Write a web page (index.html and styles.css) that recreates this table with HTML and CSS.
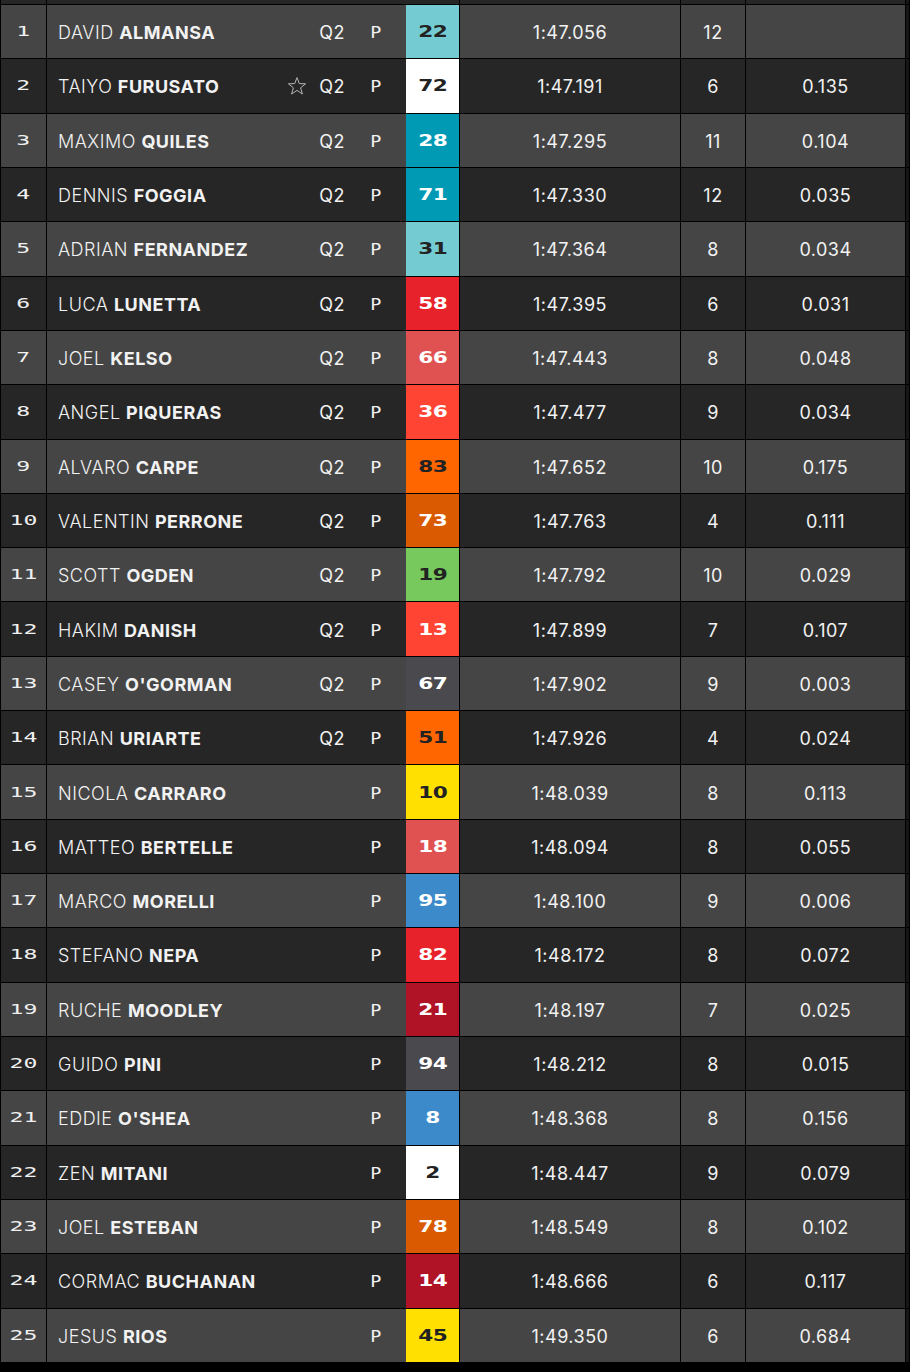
FILE: index.html
```html
<!DOCTYPE html>
<html>
<head>
<meta charset="utf-8">
<link rel="stylesheet" href="styles.css">
</head>
<body>
<div class="table">
  <div class="row top"><div class="c pos"></div><div class="c name"></div><div class="c time"></div><div class="c laps"></div><div class="c gap"></div><div class="c edge"></div></div>
</div>
<script>
const data = [
["DAVID","ALMANSA",1,"22","#75cbd2","d","1:47.056","12",""],
["TAIYO","FURUSATO",1,"72","#ffffff","d","1:47.191","6","0.135",1],
["MAXIMO","QUILES",1,"28","#009ab5","w","1:47.295","11","0.104"],
["DENNIS","FOGGIA",1,"71","#009ab5","w","1:47.330","12","0.035"],
["ADRIAN","FERNANDEZ",1,"31","#75cbd2","d","1:47.364","8","0.034"],
["LUCA","LUNETTA",1,"58","#e8222a","w","1:47.395","6","0.031"],
["JOEL","KELSO",1,"66","#e05252","w","1:47.443","8","0.048"],
["ANGEL","PIQUERAS",1,"36","#ff4433","w","1:47.477","9","0.034"],
["ALVARO","CARPE",1,"83","#ff6600","d","1:47.652","10","0.175"],
["VALENTIN","PERRONE",1,"73","#d95a00","w","1:47.763","4","0.111"],
["SCOTT","OGDEN",1,"19","#77c95d","d","1:47.792","10","0.029"],
["HAKIM","DANISH",1,"13","#ff4433","w","1:47.899","7","0.107"],
["CASEY","O'GORMAN",1,"67","#4a494e","w","1:47.902","9","0.003"],
["BRIAN","URIARTE",1,"51","#ff6600","d","1:47.926","4","0.024"],
["NICOLA","CARRARO",0,"10","#ffe000","d","1:48.039","8","0.113"],
["MATTEO","BERTELLE",0,"18","#e05252","w","1:48.094","8","0.055"],
["MARCO","MORELLI",0,"95","#3c8ac9","w","1:48.100","9","0.006"],
["STEFANO","NEPA",0,"82","#e8222a","w","1:48.172","8","0.072"],
["RUCHE","MOODLEY",0,"21","#b01226","w","1:48.197","7","0.025"],
["GUIDO","PINI",0,"94","#4a494e","w","1:48.212","8","0.015"],
["EDDIE","O'SHEA",0,"8","#3c8ac9","w","1:48.368","8","0.156"],
["ZEN","MITANI",0,"2","#ffffff","d","1:48.447","9","0.079"],
["JOEL","ESTEBAN",0,"78","#d95a00","w","1:48.549","8","0.102"],
["CORMAC","BUCHANAN",0,"14","#b01226","w","1:48.666","6","0.117"],
["JESUS","RIOS",0,"45","#ffe000","d","1:49.350","6","0.684"]
];
const star = '<svg class="star" viewBox="0 0 20 20" width="20" height="20"><path d="M10 1.6 L12.3 7.6 L18.6 7.8 L13.6 11.8 L15.4 18 L10 14.4 L4.6 18 L6.4 11.8 L1.4 7.8 L7.7 7.6 Z" fill="none" stroke="#b5b5b5" stroke-width="1" stroke-linejoin="round"/></svg>';
const t = document.querySelector('.table');
data.forEach((r, i) => {
  const row = document.createElement('div');
  row.className = 'row ' + (i % 2 === 0 ? 'odd' : 'even');
  row.innerHTML =
    '<div class="c pos"><span class="tech">' + (i + 1) + '</span></div>' +
    '<div class="c name"><div class="nm"><span class="first">' + r[0] + '</span> <span class="last">' + r[1] + '</span></div>' +
    (r[9] ? star : '') +
    '<span class="q">' + (r[2] ? 'Q2' : '') + '</span>' +
    '<span class="p"><span class="tech">P</span></span>' +
    '<span class="num ' + r[5] + '" style="background:' + r[4] + '"><span class="tech b">' + r[3] + '</span></span></div>' +
    '<div class="c time">' + r[6] + '</div>' +
    '<div class="c laps">' + r[7] + '</div>' +
    '<div class="c gap">' + r[8] + '</div>' +
    '<div class="c edge"></div>';
  t.appendChild(row);
});
</script>
</body>
</html>
```

FILE: styles.css
```css
html, body {
  margin: 0;
  padding: 0;
  background: #000;
}
body {
  width: 910px;
  height: 1372px;
  overflow: hidden;
  font-family: Inter, "Noto Sans", sans-serif;
  color: #f2f2f2;
}
.table {
  display: flex;
  flex-direction: column;
  gap: 1px;
}
.row {
  display: grid;
  grid-template-columns: 45px 412px 220px 64px 159px 3px;
  column-gap: 1px;
  padding-left: 1px;
  height: 53.32px;
}
.row.top {
  height: 4px;
}
.row.top .c { background: #262626; }
.c {
  display: flex;
  align-items: center;
  justify-content: center;
  font-size: 17.5px;
  letter-spacing: 0.5px;
  padding-top: 2px;
  box-sizing: border-box;
}
.row.top .c { padding: 0; }
.odd .c { background: #454545; }
.even .c { background: #262626; }
.row .c.edge { background: #161616; }
.pos .tech {
  font-family: "DejaVu Sans Mono", monospace;
  font-size: 14px;
  letter-spacing: 0;
  display: inline-block;
  transform: scaleX(1.65);
  color: #f0f0f0;
  margin-top: -3px;
}
.c.name {
  justify-content: flex-start;
  padding: 0 0 0 11px;
  align-items: stretch;
}
.nm {
  flex: 1;
  align-self: center;
  padding-top: 2px;
  white-space: nowrap;
  font-size: 18px;
  letter-spacing: 0.5px;
}
.first {
  font-weight: 300;
}
.last {
  font-weight: 700;
}
.star {
  align-self: center;
  margin-right: 5px;
}
.q {
  width: 40px;
  display: flex;
  align-items: center;
  justify-content: center;
  padding-top: 2px;
  font-weight: 400;
  font-size: 18px;
}
.p {
  width: 47px;
  margin-right: 7px;
  display: flex;
  align-items: center;
  justify-content: center;
}
.p .tech {
  font-family: "DejaVu Sans Mono", monospace;
  font-size: 16px;
  letter-spacing: 0;
  display: inline-block;
  transform: scaleX(1.15);
  margin-top: 2px;
}
.num {
  width: 53px;
  display: flex;
  align-items: center;
  justify-content: center;
}
.num .tech {
  font-family: "DejaVu Sans", sans-serif;
  font-weight: 700;
  font-size: 16px;
  display: inline-block;
  transform: scaleX(1.35);
  letter-spacing: -0.5px;
}
.num.d { color: #222; }
.num.w { color: #fff; }
.time, .laps, .gap {
  font-weight: 400;
  font-size: 18px;
}
```
